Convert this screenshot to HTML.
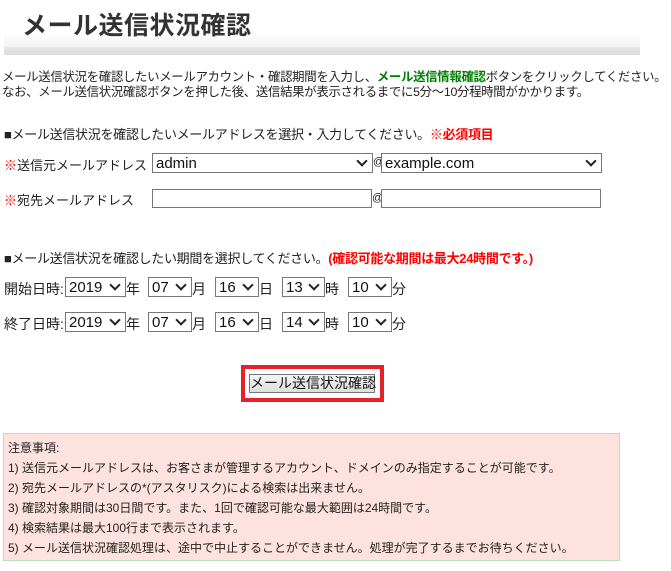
<!DOCTYPE html>
<html><head><meta charset="utf-8"><style>
*{margin:0;padding:0;box-sizing:border-box}
body{width:671px;height:571px;background:#fff;font-family:"Liberation Sans","Noto Sans CJK JP",sans-serif;color:#222;position:relative;overflow:hidden;font-size:13px}
.a{position:absolute;white-space:nowrap}
.hdr{position:absolute;left:4px;top:0;width:636px;height:55px;background:linear-gradient(#fff 0,#fff 60%,#f2f2f2 85%,#e4e4e4 87%,#dcdcdc 100%)}
.sel{position:absolute;height:20px;border:1px solid #767676;background:#fff;font-size:15px;line-height:19px;padding-left:3px;color:#111}
.sel:after{content:"";position:absolute;right:6px;top:3px;width:6px;height:6px;border-right:2px solid #222;border-bottom:2px solid #222;transform:rotate(45deg)}
.inp{position:absolute;height:19px;border:1px solid #767676;background:#fff}
.red{color:#f00;font-weight:bold}
.note{position:absolute;left:3px;top:433px;width:617px;height:128px;background:#fde2df;border:1px solid #b8e0b8;font-size:12px;padding:4px 0 0 4px;line-height:20px}
</style></head><body>
<div class="hdr"></div>
<div class="a" style="left:22px;top:6px;font-size:25px;font-weight:bold;color:#333;letter-spacing:0.5px">メール送信状況確認</div>
<div class="a" style="left:2px;top:70px;font-size:12.4px;line-height:15px;letter-spacing:-0.3px">メール送信状況を確認したいメールアカウント・確認期間を入力し、<span style="color:#008000;font-weight:bold">メール送信情報確認</span>ボタンをクリックしてください。<br>なお、メール送信状況確認ボタンを押した後、送信結果が表示されるまでに5分～10分程時間がかかります。</div>
<div class="a" style="left:4px;top:124px;font-size:13px;letter-spacing:-0.3px">■メール送信状況を確認したいメールアドレスを選択・入力してください。<span class="red">※必須項目</span></div>
<div class="a" style="left:4px;top:155px"><span style="color:#f00">※</span>送信元メールアドレス：</div>
<div class="sel" style="left:152px;top:153px;width:221px">admin</div>
<div class="a" style="left:373px;top:156px;font-size:11px">@</div>
<div class="sel" style="left:381px;top:153px;width:221px">example.com</div>
<div class="a" style="left:4px;top:190px"><span style="color:#f00">※</span>宛先メールアドレス　：</div>
<div class="inp" style="left:152px;top:189px;width:220px"></div>
<div class="a" style="left:372px;top:192px;font-size:11px">@</div>
<div class="inp" style="left:381px;top:189px;width:220px"></div>
<div class="a" style="left:4px;top:248px;letter-spacing:-0.3px">■メール送信状況を確認したい期間を選択してください。<span class="red">(確認可能な期間は最大24時間です。)</span></div>
<div class="a" style="left:4px;top:279px;font-size:14px">開始日時:</div>
<div class="sel" style="left:65px;top:277px;width:61px">2019</div><div class="a" style="left:126px;top:279px;font-size:14px">年</div>
<div class="sel" style="left:148px;top:277px;width:44px">07</div><div class="a" style="left:192px;top:279px;font-size:14px">月</div>
<div class="sel" style="left:215px;top:277px;width:44px">16</div><div class="a" style="left:259px;top:279px;font-size:14px">日</div>
<div class="sel" style="left:282px;top:277px;width:43px">13</div><div class="a" style="left:325px;top:279px;font-size:14px">時</div>
<div class="sel" style="left:348px;top:277px;width:44px">10</div><div class="a" style="left:392px;top:279px;font-size:14px">分</div>
<div class="a" style="left:4px;top:314px;font-size:14px">終了日時:</div>
<div class="sel" style="left:65px;top:312px;width:61px">2019</div><div class="a" style="left:126px;top:314px;font-size:14px">年</div>
<div class="sel" style="left:148px;top:312px;width:44px">07</div><div class="a" style="left:192px;top:314px;font-size:14px">月</div>
<div class="sel" style="left:215px;top:312px;width:44px">16</div><div class="a" style="left:259px;top:314px;font-size:14px">日</div>
<div class="sel" style="left:282px;top:312px;width:43px">14</div><div class="a" style="left:325px;top:314px;font-size:14px">時</div>
<div class="sel" style="left:348px;top:312px;width:44px">10</div><div class="a" style="left:392px;top:314px;font-size:14px">分</div>
<div style="position:absolute;left:241px;top:365px;width:143px;height:37px;border:4px solid #e8202a"></div>
<div class="a" style="left:249px;top:374px;width:126px;height:19px;border:1px solid #777;background:linear-gradient(#f4f4f4,#dedede);font-size:14px;line-height:17px;text-align:center;color:#111">メール送信状況確認</div>
<div class="note">注意事項:<br>1) 送信元メールアドレスは、お客さまが管理するアカウント、ドメインのみ指定することが可能です。<br>2) 宛先メールアドレスの*(アスタリスク)による検索は出来ません。<br>3) 確認対象期間は30日間です。また、1回で確認可能な最大範囲は24時間です。<br>4) 検索結果は最大100行まで表示されます。<br>5) メール送信状況確認処理は、途中で中止することができません。処理が完了するまでお待ちください。</div>
</body></html>
